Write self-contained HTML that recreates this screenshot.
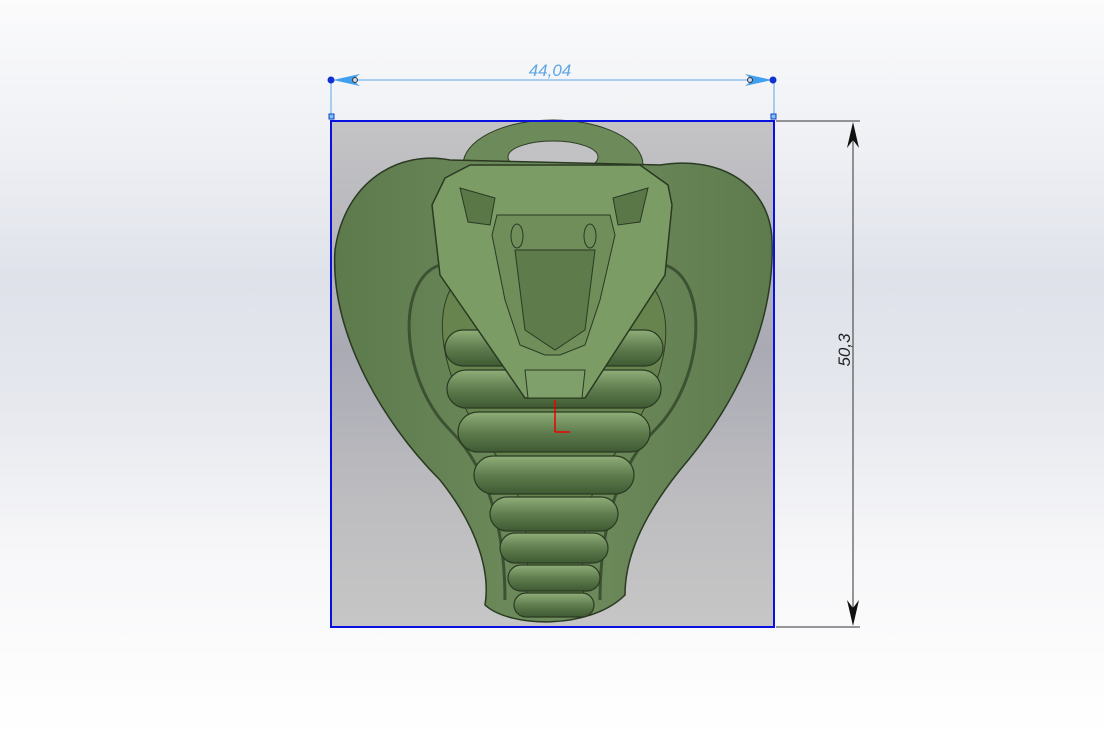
<!DOCTYPE html>
<html><head><style>
html,body{margin:0;padding:0}
body{width:1104px;height:736px;overflow:hidden;background:linear-gradient(180deg,#fbfbfc 0%,#eef0f4 20%,#dfe2ea 38%,#e6e8ee 55%,#f7f7f9 75%,#ffffff 100%);font-family:"Liberation Sans",sans-serif}
</style></head><body>
<svg width="1104" height="736" style="position:absolute;left:0;top:0">
<defs>
<linearGradient id="bg" x1="0" x2="0" y1="0" y2="1">
<stop offset="0" stop-color="#c4c4c6"/><stop offset="0.45" stop-color="#a9aab4"/><stop offset="0.75" stop-color="#bdbdc0"/><stop offset="1" stop-color="#c6c6c6"/></linearGradient>
<linearGradient id="hood" x1="0" x2="1"><stop offset="0" stop-color="#5c7a4c"/><stop offset="0.5" stop-color="#6f8c5d"/><stop offset="1" stop-color="#5e7b4e"/></linearGradient>
<linearGradient id="seg" x1="0" x2="0" y1="0" y2="1"><stop offset="0" stop-color="#8fae79"/><stop offset="0.5" stop-color="#5f7d4e"/><stop offset="1" stop-color="#3f5a33"/></linearGradient>
</defs>
<rect x="331" y="121" width="443" height="506" fill="url(#bg)"/>
<!-- loop -->
<ellipse cx="553" cy="165" rx="90" ry="45" fill="#6c8a5a" stroke="#2e3e26"/>
<ellipse cx="553" cy="157" rx="45" ry="16" fill="#c2c2c4" stroke="#2e3e26"/>
<!-- hood -->
<path d="M450,160 C400,150 345,180 335,250 C330,330 380,420 440,480 C480,530 490,575 485,605 C510,628 590,630 625,595 C625,560 640,520 680,470 C740,400 775,320 772,240 C770,185 720,155 660,165 Z" fill="url(#hood)" stroke="#2a3a22" stroke-width="1.5"/>
<path d="M440,265 C395,280 400,380 450,430 C500,480 505,560 505,600" fill="none" stroke="#3c5232" stroke-width="3"/>
<path d="M665,265 C710,280 705,380 655,430 C605,480 600,560 600,600" fill="none" stroke="#3c5232" stroke-width="3"/>
<path d="M450,290 C430,330 450,400 500,460 C530,500 530,560 525,610 L585,610 C580,560 580,500 610,460 C660,400 680,330 655,290 Z" fill="#67844f" stroke="#2e3e26"/>
<!-- belly segments -->
<g stroke="#2a3a22" stroke-width="1.2" fill="url(#seg)">
<rect x="445" y="330" width="218" height="36" rx="18"/>
<rect x="447" y="370" width="214" height="38" rx="19"/>
<rect x="458" y="412" width="192" height="40" rx="20"/>
<rect x="474" y="456" width="160" height="38" rx="19"/>
<rect x="490" y="497" width="128" height="34" rx="17"/>
<rect x="500" y="533" width="108" height="30" rx="15"/>
<rect x="508" y="565" width="92" height="26" rx="13"/>
<rect x="514" y="593" width="80" height="24" rx="12"/>
</g>
<!-- head -->
<path d="M445,178 L470,165 L640,165 L668,185 L672,205 L665,275 L585,398 L525,398 L440,275 L432,205 Z" fill="#7c9c66" stroke="#2a3a22" stroke-width="1.5"/>
<path d="M460,188 L495,198 L490,225 L468,222 Z M648,188 L613,198 L618,225 L640,222 Z" fill="#5a7748" stroke="#2a3a22"/>
<path d="M497,215 L610,215 L615,235 L600,300 L585,345 L560,355 L545,355 L520,345 L505,300 L492,235 Z" fill="#6f8e5a" stroke="#2a3a22"/>
<path d="M515,250 L595,250 L585,330 L555,350 L525,330 Z" fill="#5e7b4c" stroke="#2a3a22"/>
<ellipse cx="517" cy="236" rx="6" ry="12" fill="none" stroke="#2a3a22"/>
<ellipse cx="590" cy="236" rx="6" ry="12" fill="none" stroke="#2a3a22"/>
<path d="M525,370 L585,370 L582,398 L528,398 Z" fill="#7fa06a" stroke="#2a3a22"/>
<!-- origin -->
<line x1="555" y1="400" x2="555" y2="432" stroke="#e00" stroke-width="1.5"/>
<line x1="555" y1="432" x2="570" y2="432" stroke="#e00" stroke-width="1.5"/>
<!-- border -->
<rect x="331" y="121" width="443" height="506" fill="none" stroke="#0a10e0" stroke-width="2"/>
<!-- top dimension -->
<g stroke="#5ea6e6" stroke-width="1" fill="none">
<line x1="331" y1="80" x2="331" y2="117"/><line x1="774" y1="80" x2="774" y2="117"/>
<line x1="340" y1="80" x2="765" y2="80"/>
</g>
<path d="M333,80 L360,74 L352,80 L360,86 Z" fill="#3fa0f0"/>
<path d="M772,80 L745,74 L753,80 L745,86 Z" fill="#3fa0f0"/>
<circle cx="331" cy="80" r="3.5" fill="#1030d0"/><circle cx="773" cy="80" r="3.5" fill="#1030d0"/>
<circle cx="355" cy="80" r="2.5" fill="#c6d6ec" stroke="#333"/><circle cx="750" cy="80" r="2.5" fill="#c6d6ec" stroke="#333"/>
<rect x="329" y="114" width="5" height="5" fill="#7ec0f8" stroke="#1040c0"/><rect x="771" y="114" width="5" height="5" fill="#7ec0f8" stroke="#1040c0"/>
<text x="550" y="76" font-size="17" font-style="italic" fill="#5ea6e6" text-anchor="middle" font-family="Liberation Sans">44,04</text>
<!-- right dimension -->
<g stroke="#333" stroke-width="1">
<line x1="776" y1="121" x2="860" y2="121"/><line x1="776" y1="627" x2="860" y2="627"/>
<line x1="853" y1="125" x2="853" y2="623"/>
</g>
<path d="M853,122 L847,148 L853,140 L859,148 Z" fill="#111"/>
<path d="M853,626 L847,600 L853,608 L859,600 Z" fill="#111"/>
<text x="0" y="0" font-size="17" font-style="italic" fill="#222" text-anchor="middle" transform="translate(850,350) rotate(-90)">50,3</text>
</svg>
</body></html>
